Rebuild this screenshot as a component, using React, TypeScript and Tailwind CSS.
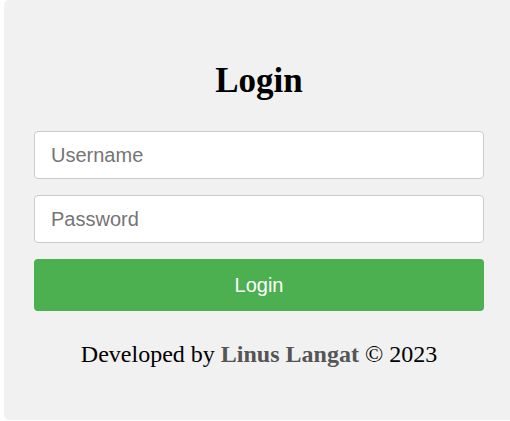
import React from 'react'

export default function App() {
  return (
    <div className="min-h-screen bg-white overflow-hidden">
      <div className="ml-[4px] w-[510px] h-[420px] bg-[#f1f1f1] rounded-[5px] px-[30px] pt-[61px]">
        <h1 className="text-center text-[35px] leading-[40px] font-bold text-black font-['Liberation_Serif',serif]">
          Login
        </h1>

        <form className="mt-[30px] w-[450px] flex flex-col gap-[16px]" onSubmit={(e) => e.preventDefault()}>
          <input
            type="text"
            placeholder="Username"
            className="h-[48px] w-full bg-white border border-[#cccccc] rounded-[4px] px-[16px] text-[20px] font-['Liberation_Sans',Arial,sans-serif] placeholder:text-[#757575] outline-none"
          />
          <input
            type="password"
            placeholder="Password"
            className="h-[48px] w-full bg-white border border-[#cccccc] rounded-[4px] px-[16px] text-[20px] font-['Liberation_Sans',Arial,sans-serif] placeholder:text-[#757575] outline-none"
          />
          <button
            type="submit"
            className="h-[52px] w-full bg-[#4caf50] rounded-[4px] text-white text-[20px] font-['Liberation_Sans',Arial,sans-serif]"
          >
            Login
          </button>
        </form>

        <p className="mt-[29px] w-[450px] text-center text-[24px] leading-[28px] text-black font-['Liberation_Serif',serif]">
          Developed by <span className="font-bold text-[#555555]">Linus Langat</span> © 2023
        </p>
      </div>
    </div>
  )
}
